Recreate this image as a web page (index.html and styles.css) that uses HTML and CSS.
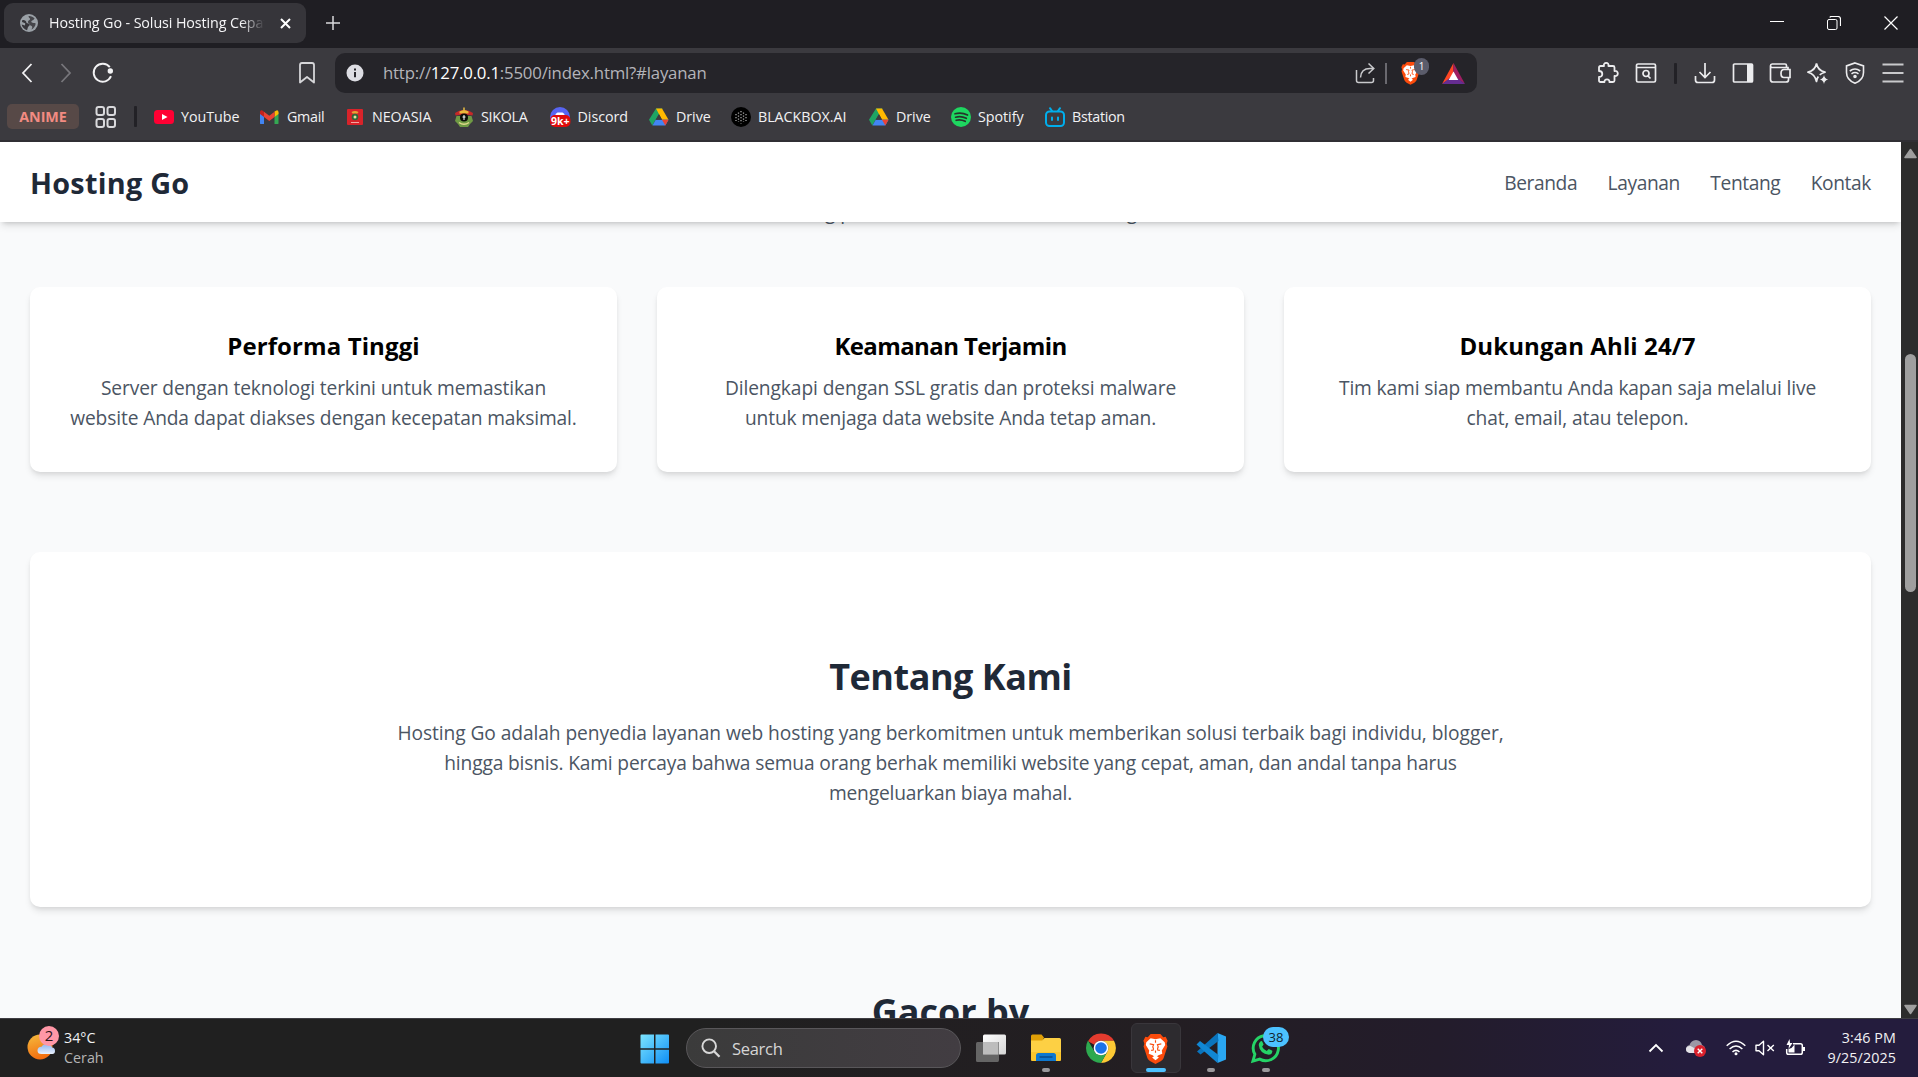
FILE: index.html
```html
<!DOCTYPE html>
<html lang="id">
<head>
<meta charset="utf-8">
<title>Hosting Go - Solusi Hosting Cepat</title>
<link rel="stylesheet" href="styles.css">
</head>
<body>
<div class="tabstrip">
  <div class="tab">
    <svg class="favicon" width="18" height="18" viewBox="0 0 18 18"><circle cx="9" cy="9" r="9" fill="#9aa0a6"/><path d="M2.2 6.2C4 5.400 6.200 6.400 6.300 8.200c.1 1.300 1.800.8 2.900 1.500 1.200.8.2 2.100-.8 2.800-.9.700-.6 2.500-1.400 3.800C4 15.400 1.900 12.600 1.700 10.500L5 11.400 5.200 9.200 2 8z" fill="#36353a"/><path d="M8.500 2c2-.3 4.600.6 6.200 2.700-1 .2-1 1.300-2 1.600-1.200.4-2 1.500-.9 2.100 1 .5 2.400.2 3.900 1.100-.3 2.700-1.900 4.900-4.300 5.900.7-1.200 1.300-2.300.5-3.200-.9-.9-2-.6-2.300-2-.2-1.200-1.700-1-1.700-2.300 0-1.700 2.300-1.500 2.300-2.900 0-1-1.600-.9-1.700-3z" fill="#36353a" opacity=".85"/></svg>
    <span class="tab-title">Hosting Go - Solusi Hosting Cepat</span>
    <svg class="tab-close" width="11" height="11" viewBox="0 0 11 11"><path d="M1 1l9 9M10 1l-9 9" stroke="#fff" stroke-width="2"/></svg>
  </div>
  <svg class="newtab" width="14" height="14" viewBox="0 0 14 14"><path d="M7 0v14M0 7h14" stroke="#d9d9dc" stroke-width="1.500"/></svg>
  <div class="winctl">
    <svg width="14" height="14" viewBox="0 0 14 14"><path d="M0 5.500h14" stroke="#fff"/></svg>
    <svg width="14" height="14" viewBox="0 0 14 14" fill="none" stroke="#fff"><rect x=".5" y="3.500" width="9.500" height="10" rx="1.500"/><path d="M3 1.500c0-.6.600-1 1.200-1H11c1.500 0 2.500 1 2.500 2.500V10" stroke-width="1.200"/></svg>
    <svg width="14" height="14" viewBox="0 0 14 14"><path d="M.5.5l13 13M13.500.5l-13 13" stroke="#fff" stroke-width="1.200"/></svg>
  </div>
</div>

<div class="toolbar">
  <svg class="back" width="12" height="20" viewBox="0 0 12 20"><path d="M10.500 1L2 10l8.500 9" fill="none" stroke="#f2f2f4" stroke-width="1.800"/></svg>
  <svg class="fwd" width="12" height="20" viewBox="0 0 12 20"><path d="M1.500 1L10 10l-8.500 9" fill="none" stroke="#77767b" stroke-width="1.800"/></svg>
  <svg class="reload" width="22" height="22" viewBox="0 0 22 22"><path d="M17.800 5.200A9 9 0 1 0 19 14.200" fill="none" stroke="#f2f2f4" stroke-width="1.900"/><circle cx="18.300" cy="9" r="2.700" fill="#f2f2f4"/></svg>
  <svg class="mark" width="16" height="22" viewBox="0 0 16 22"><path d="M3 1h10q2 0 2 2v17.500L8 15l-7 5.500V3q0-2 2-2z" fill="none" stroke="#d6d6d9" stroke-width="1.800" stroke-linejoin="round"/></svg>
  <div class="urlbar">
    <svg class="info" width="18" height="18" viewBox="0 0 18 18"><circle cx="9" cy="9" r="8.500" fill="#dddde3"/><path d="M9 8v5.200M9 4.500v2" stroke="#27262b" stroke-width="2"/></svg>
    <span class="url">http://<b>127.0.0.1</b>:5500/index.html?#layanan</span>
    <svg class="share" width="21" height="22" viewBox="0 0 21 22"><path d="M1.500 8v10.500q0 2 2 2h13q2 0 2-2V16M5.500 15.500c.3-5.500 3.500-9 9.500-9h3M13.500 1.500l5.300 5-5.300 5" fill="none" stroke="#c9c9cc" stroke-width="1.500"/></svg>
    <i class="urlsep"></i>
    <div class="shield">
      <svg width="19" height="24" viewBox="0 0 26 32"><use href="#brave"/></svg>
      <span class="count">1</span>
    </div>
    <svg class="bat" width="23" height="21" viewBox="0 0 23 21"><path d="M11.500 0L0 21l11.500-8z" fill="#ff4724"/><path d="M11.500 0L23 21l-11.500-8z" fill="#9e1f63"/><path d="M0 21l11.500-9L23 21z" fill="#662d91"/><path d="M11.500 8.500l4.800 8.500H6.700z" fill="#fff"/></svg>
  </div>
  <div class="tools">
    <svg width="22" height="22" viewBox="0 0 22 22" fill="none" stroke="#ececee" stroke-width="1.800" stroke-linejoin="round"><path d="M3.500 4H7c-.6-2 .6-3.100 2.200-3.100S12 2 11.400 4H16q1.500 0 1.500 1.500V9c2-.3 3.300.6 3.300 2.500S19.500 14.300 17.500 14v4.500q0 1.500-1.500 1.500h-3.600c.3-1.600-.7-2.600-2.400-2.600S7.200 18.400 7.500 20H3.500Q2 20 2 18.500V15c2.300 0 3.300-1.300 3.300-3S4 9 2 9V5.500Q2 4 3.500 4z"/></svg>
    <svg width="22" height="22" viewBox="0 0 22 22" fill="none" stroke="#ececee" stroke-width="1.700"><rect x="1.500" y="2" width="19" height="18" rx="1.500"/><path d="M1.500 5.500h19M13 14l2.500 2.500"/><circle cx="11" cy="11.500" r="3"/></svg>
    <i class="toolsep"></i>
    <svg width="22" height="22" viewBox="0 0 22 22" fill="none" stroke="#ececee" stroke-width="1.700"><path d="M11 1v14M5.500 10l5.500 5.500L16.500 10M1.500 14v4q0 2.500 2.500 2.500h14q2.500 0 2.500-2.500v-4"/></svg>
    <svg width="22" height="22" viewBox="0 0 22 22"><rect x="1.500" y="2" width="19" height="18" rx="1" fill="none" stroke="#ececee" stroke-width="1.700"/><path d="M15 2h6v18h-6z" fill="#ececee"/></svg>
    <svg width="22" height="22" viewBox="0 0 22 22" fill="none" stroke="#ececee" stroke-width="1.700"><path d="M19 7V5.500H3.200Q1.500 5.500 1.500 3.800T3.200 2H16q1.500 0 1.500 1.500v2M1.500 4v13.500Q1.500 20 4 20h13q2.500 0 2.500-2v-2M21 7.500h-6q-3 0-3 4t3 4h6z"/></svg>
    <svg width="22" height="22" viewBox="0 0 22 22"><path d="M9.500 1.500q1.300 7 8.500 8.700-3.300.9-5.300 2.600M9.500 1.500Q8.200 8.500 1 10.200q7 1.800 8.500 9.300.5-3 1.800-5" fill="none" stroke="#ececee" stroke-width="1.700" stroke-linejoin="round"/><path d="M17 13q.7 3.800 4.200 4.500-3.500.7-4.200 4.500-.7-3.800-4.200-4.500 3.500-.7 4.200-4.500z" fill="#ececee"/></svg>
    <svg width="22" height="22" viewBox="0 0 22 22" fill="none" stroke="#ececee" stroke-width="1.600"><path d="M11 .9l8.500 3v6.600c0 5-3.200 8.700-8.500 10.700C5.700 19.200 2.500 15.500 2.500 10.500V3.900z"/><path d="M5.800 9q5.200-4 10.400 0M7.500 11.800q3.500-2.500 7 0"/><circle cx="11" cy="14.500" r="1" fill="#ececee"/></svg>
    <svg width="22" height="22" viewBox="0 0 22 22" stroke="#c9c9cc" stroke-width="1.800"><path d="M.5 2.500h21M.5 11h21M.5 19.500h21"/></svg>
  </div>
</div>

<div class="bookmarks">
  <span class="chip">ANIME</span>
  <svg class="grid" width="22" height="22" viewBox="0 0 22 22" fill="none" stroke="#d9d9dc" stroke-width="2"><rect x="1.500" y="1" width="7.500" height="8" rx="2"/><rect x="12.500" y="1" width="7.500" height="8" rx="2"/><rect x="1.500" y="13" width="7.500" height="8" rx="2"/><rect x="12.500" y="13" width="7.500" height="8" rx="2"/></svg>
  <i class="barsep"></i>
  <div class="links">
    <a><svg width="20" height="20" viewBox="0 0 20 20"><rect y="3" width="20" height="14" rx="3.500" fill="#ff0033"/><path d="M8 7l5.500 3L8 13z" fill="#fff"/></svg>YouTube</a>
    <a><svg width="20" height="20" viewBox="0 0 20 20"><path d="M0 16.500V6l4 3v8H1.500Q0 17 0 16.500z" fill="#4285f4"/><path d="M14.500 17V9l4-3v10.500q0 .5-1.500.5z" fill="#34a853"/><path d="M14.500 4.500L17 3.300q1.500.2 1.500 2V7l-4 3z" fill="#fbbc04"/><path d="M4 4.700l5.300 4.100 5.200-4.100V10l-5.200 4L4 10z" fill="#ea4335"/><path d="M0 7V5.300Q0 3 2 3.300l2 1.400V10z" fill="#c5221f"/></svg><span class="tight">Gmail</span></a>
    <a><svg width="20" height="20" viewBox="0 0 20 20"><rect x="2" y="2" width="16" height="16" rx="1" fill="#d8232a"/><path d="M6.500 5q3.500-2 7 0l-1 1.500h-5z" fill="#e6a532"/><circle cx="10" cy="10" r="3.300" fill="#2d6b39"/><circle cx="10" cy="10" r="1.500" fill="#e9dca0"/><path d="M6 15.500h8" stroke="#f3a7a0"/></svg>NEOASIA</a>
    <a><svg width="20" height="20" viewBox="0 0 20 20"><path d="M9.300 3V.5h1.400V3z" fill="#f5c542"/><path d="M2.500 9L1 14l3 3 2 3h8l2-3 3-3-1.500-5z" fill="#6f9a44"/><path d="M1 6q4-3 9-3t9 3l-.5 2.500-4-.5h-9l-4 .5z" fill="#c62828"/><path d="M5.500 4.500q4.500-3 9 0v2h-9z" fill="#e9b93a"/><circle cx="10" cy="10.500" r="4" fill="#0a0d08"/><path d="M10 8v5M8.500 10h3" stroke="#fff"/><path d="M5 15.500q5 3.500 10 0" stroke="#e0d98c" fill="none" stroke-width="1.500"/></svg><span class="tight">SIKOLA</span></a>
    <a><svg width="21" height="20" viewBox="0 0 21 20"><circle cx="10" cy="10" r="10" fill="#5865f2"/><path d="M5 9q.5-3 2.500-3.500h5Q14.500 6 15 9z" fill="#fff"/><rect y="8" width="20.500" height="12" rx="5" fill="#e00b0b"/><text x="10.200" y="17.500" text-anchor="middle" class="nine">9k+</text></svg>Discord</a>
    <a><svg width="20" height="20" viewBox="0 0 20 20"><use href="#drive"/></svg>Drive</a>
    <a><svg width="20" height="20" viewBox="0 0 20 20"><circle cx="10" cy="10" r="10" fill="#000"/><g stroke="#a5a5a5" stroke-width="1.300" stroke-dasharray="1.300 1.700"><path d="M5 7v7M7.500 5.500v9.500M10 4v12.500M12.500 5.500v9.500M15 7v7"/></g></svg>BLACKBOX.AI</a>
    <a><svg width="20" height="20" viewBox="0 0 20 20"><use href="#drive"/></svg>Drive</a>
    <a><svg width="20" height="20" viewBox="0 0 20 20"><circle cx="10" cy="10" r="10" fill="#1ed760"/><path d="M4 6.800q6.500-2 12.500 1.200M4.600 10.200q5.500-1.500 10.700 1.100M5.200 13.300q4.500-1.200 9 1" fill="none" stroke="#26352b" stroke-width="1.700" stroke-linecap="round"/></svg>Spotify</a>
    <a><svg width="20" height="20" viewBox="0 0 20 20" fill="none" stroke="#00aeec" stroke-width="2" stroke-linecap="round"><rect x="1" y="4.500" width="18" height="14.500" rx="3.500"/><path d="M5 1.200L7 4M15 1.200L13 4M7 10.500v2.500M13 10.500v2.500"/></svg><span class="tight">Bstation</span></a>
  </div>
</div>

<div class="window">
  <div class="page">
    <header>
      <h1>Hosting Go</h1>
      <nav><a>Beranda</a><a>Layanan</a><a>Tentang</a><a>Kontak</a></nav>
    </header>
    <main>
      <p class="lead">Solusi hosting premium untuk web berkembang Anda</p>
      <div class="cards">
        <article><h3 class="w1">Performa Tinggi</h3><p><span>Server dengan teknologi terkini untuk memastikan</span><br><span>website Anda dapat diakses dengan kecepatan maksimal.</span></p></article>
        <article><h3 class="w2">Keamanan Terjamin</h3><p><span class="l1">Dilengkapi dengan SSL gratis dan proteksi malware</span><br><span>untuk menjaga data website Anda tetap aman.</span></p></article>
        <article><h3 class="w3">Dukungan Ahli 24/7</h3><p><span>Tim kami siap membantu Anda kapan saja melalui live</span><br><span>chat, email, atau telepon.</span></p></article>
      </div>
      <section class="about">
        <h2 class="w4">Tentang Kami</h2>
        <p><span class="l3">Hosting Go adalah penyedia layanan web hosting yang berkomitmen untuk memberikan solusi terbaik bagi individu, blogger,</span><br><span class="l2">hingga bisnis. Kami percaya bahwa semua orang berhak memiliki website yang cepat, aman, dan andal tanpa harus</span><br><span class="l2">mengeluarkan biaya mahal.</span></p>
      </section>
      <h2>Gacor by</h2>
    </main>
  </div>
  <div class="scroll">
    <svg width="13" height="11" viewBox="0 0 13 11"><path d="M6.500 1.500L12 9.500H1z" fill="#9f9f9f" stroke="#9f9f9f" stroke-width="1.500" stroke-linejoin="round"/></svg>
    <i class="thumb"></i>
    <svg class="down" width="13" height="11" viewBox="0 0 13 11"><path d="M6.500 9.500L1 1.500h11z" fill="#9f9f9f" stroke="#9f9f9f" stroke-width="1.500" stroke-linejoin="round"/></svg>
  </div>
</div>

<div class="taskbar">
  <div class="weather">
    <svg width="34" height="36" viewBox="0 0 34 36"><defs><linearGradient id="sun" x1=".3" y1="0" x2=".6" y2="1"><stop offset="0" stop-color="#f5b63a"/><stop offset="1" stop-color="#f2690d"/></linearGradient><linearGradient id="cl" x1="0" y1="0" x2="0" y2="1"><stop offset="0" stop-color="#8fb4ee"/><stop offset="1" stop-color="#e9f1fd"/></linearGradient></defs><circle cx="13" cy="22" r="12.500" fill="url(#sun)"/><path d="M14.500 29q-4 0-4-3.500t4-3.800Q16 18.500 20 19q4.500.5 5 3.500 3 0 3 3.500t-3.500 3z" fill="url(#cl)"/><circle cx="22" cy="11" r="10" fill="#ff97a6"/><text x="22" y="16" text-anchor="middle" class="wnum">2</text></svg>
    <div><span>34°C</span><span class="dim">Cerah</span></div>
  </div>
  <div class="apps">
    <svg class="start" width="30" height="30" viewBox="0 0 30 30"><defs><linearGradient id="win" gradientUnits="userSpaceOnUse" x1="0" y1="0" x2="30" y2="30"><stop offset="0" stop-color="#7fe7ff"/><stop offset="1" stop-color="#0c8cf5"/></linearGradient></defs><path d="M1.500.5H14v13.700H.5V1.500q0-1 1-1zM15.500.5H28q1 0 1 1v12.700H15.500zM.5 15.700H14v13.800H1.500q-1 0-1-1zM15.500 15.700H29v12.800q0 1-1 1H15.500z" fill="url(#win)"/></svg>
    <div class="search"><svg width="20" height="20" viewBox="0 0 20 20" fill="none" stroke="#d8d8d8" stroke-width="1.900"><circle cx="8.200" cy="8.200" r="6.800"/><path d="M13 13.200l5.500 5.500" stroke-width="2.300"/></svg><span>Search</span></div>
    <svg class="tv" width="32" height="30" viewBox="0 0 32 30"><defs><linearGradient id="t1" x1="0" y1="0" x2="1" y2="1"><stop offset="0" stop-color="#fff"/><stop offset="1" stop-color="#d5d5d5"/></linearGradient></defs><rect x="8" y="1.500" width="23" height="20" rx="1.500" fill="url(#t1)"/><path d="M2.500 9H24v12.500H24V27q0 2-1.500 2h-20Q1 29 1 27.500v-17Q1 9 2.500 9z" fill="#777" opacity=".8"/><path d="M8 9h15v12.500H8z" fill="#bdbdbd"/></svg>
    <svg class="fx" width="32" height="32" viewBox="0 0 32 32"><path d="M1 4q0-1.500 1.500-1.500h9L14 5.500 12 10H1z" fill="#e0a007"/><path d="M1 8.500h11L14.500 6H29.500Q31 6 31 7.500v20q0 1.500-1.500 1.500h-27Q1 29 1 27.500z" fill="#fdd044"/><path d="M1 20h30v7.500q0 1.500-1.500 1.500h-27Q1 29 1 27.500z" fill="#f9bd1c" opacity=".55"/><path d="M6 29v-5.500q0-2.500 2.500-2.500h15q2.500 0 2.500 2.500V29z" fill="#0f78cf"/><path d="M9.500 25h13" stroke="#0a4b8c" stroke-width="1.500"/></svg>
    <svg class="chrome" width="32" height="32" viewBox="0 0 48 48"><path d="M4.500 14A22.500 22.500 0 0 1 43.500 13H24a11 11 0 0 0-10 6z" fill="#e33b2e"/><path d="M43.500 13A22.500 22.500 0 0 1 24 46.500L33.500 29.500A11 11 0 0 0 24 13z" fill="#fcc934"/><path d="M4.500 12.800A22.500 22.500 0 0 0 24 46.500l9.500-17a11 11 0 0 1-19 0z" fill="#2da94f"/><circle cx="24" cy="24" r="11" fill="#fff"/><circle cx="24" cy="24" r="8.700" fill="#1a73e8"/></svg>
    <div class="active"><svg width="27" height="31" viewBox="0 0 26 32"><defs><g id="brave"><path d="M8 1h10l3 3.500 2.500-.6L25.500 8l-1 3 .8 3-4 12q-1 2-3 3.200L13 32l-5.300-2.800q-2-1.200-3-3.200L.7 14l.8-3-1-3 2-4.100L5 4.500z" fill="#fb4b0c"/><path d="M3.500 9.500L8 5.500l5 1 5-1 4.500 4 .5 3-3.500 5.500.5 3.500L16 23l-3 2-3-2-4-1.500.5-3.500L3 12.500z" fill="#fff"/><path d="M7 11.300l4 .7-.8 2.300q1 1.700.5 3.200l-2.200.5M19 11.300l-4 .7.8 2.300q-1 1.700-.5 3.200l2.200.5M13 7.500V10M13 18v2.500" fill="none" stroke="#fb4b0c" stroke-width="1.200"/><path d="M9.500 25.300L13 23l3.500 2.300L13 28z" fill="#fff"/></g><g id="drive"><path d="M7 1.500h6.500L7 12 3.300 18.500 0 12.700z" fill="#1fa463"/><path d="M7 1.500h6L19.500 12.700H13z" fill="#ffba00"/><path d="M3.500 18.500L6.700 12.700H19.500L16.300 18.500z" fill="#4285f4"/><path d="M13 12.700h6.500L16.300 18.500z" fill="#ea4335"/><path d="M10 7.200l3 5.500H6.800z" fill="#3b3a3f"/></g></defs><use href="#brave"/></svg><i></i></div>
    <svg class="vs" width="32" height="32" viewBox="0 0 32 32"><path d="M22.500 1L31 4.500v23L22.500 31z" fill="#2aa7f2"/><path d="M22.500 1L2 19.500l3.500 3L23.500 9z" fill="#0a74bd"/><path d="M22.500 31L1.500 12.500 5 9l18.500 14z" fill="#1187d4"/></svg>
    <div class="wa"><svg width="31" height="32" viewBox="0 0 32 32"><path d="M3 29.500l2-7A13 13 0 1 1 10 27.500z" fill="none" stroke="#25d366" stroke-width="3"/><path d="M10.500 9.500q1.500-1.500 2.500.5l1 2.500-1.500 2.200q1.500 3 4.800 4.500l2-2.200 3.700 1.800q.5 3.500-3.500 4.200Q10 22 9 13q0-2 1.500-3.500z" fill="#25d366"/></svg><span>38</span></div>
  </div>
  <div class="dots"><i></i><i></i><i></i></div>
  <div class="tray">
    <svg class="chev" width="16" height="12" viewBox="0 0 16 12"><path d="M1.500 9.500L8 3l6.500 6.500" fill="none" stroke="#fff" stroke-width="1.800"/></svg>
    <svg class="cloud" width="22" height="18" viewBox="0 0 22 18"><path d="M5 14Q.5 13.500 1 9.500 1.500 6.500 4.500 6 6 1.500 11 1q5 .3 6 5 3 1 3 4t-3 4z" fill="#9b98a5"/><path d="M4.500 14Q.8 13 1 9.800 2 6.500 5.500 7l9 5v2z" fill="#e4e3e8"/><circle cx="15" cy="12" r="6" fill="#d9202c"/><path d="M12.700 9.700l4.600 4.600M17.300 9.700l-4.600 4.600" stroke="#fff" stroke-width="1.400"/></svg>
    <svg class="wifi" width="20" height="16" viewBox="0 0 20 16" fill="none" stroke="#fff" stroke-width="1.500"><path d="M.7 5.800q9.300-9 18.600 0M3.600 9q6.400-6 12.800 0M6.500 12q3.500-3.200 7 0"/><circle cx="10" cy="13.700" r="1.500" fill="#fff" stroke="none"/></svg>
    <svg class="snd" width="20" height="16" viewBox="0 0 20 16" fill="none" stroke="#fff" stroke-width="1.400"><path d="M1 5.200h3L8.500 1.300v13.400L4 10.800H1zM12.500 5l6.300 6M18.800 5l-6.300 6" stroke-linejoin="round"/></svg>
    <svg class="pwr" width="21" height="18" viewBox="0 0 21 18"><path d="M8 4.700h7.500q1.800 0 1.800 1.800v7q0 1.800-1.800 1.800h-12q-1.800 0-1.800-1.800V10" fill="none" stroke="#fff" stroke-width="1.500"/><path d="M18 8h2v4h-2zM3.500 13.500V10l3-1 3-3.500V13.500z" fill="#fff"/><path d="M4.500 0L1.500 6H4l-.5 4 4-6H5z" fill="#fff"/></svg>
    <div class="clock"><span>3:46 PM</span><span>9/25/2025</span></div>
  </div>
</div>
</body>
</html>
```
FILE: styles.css
```css
* { box-sizing: border-box; margin: 0; padding: 0; }
body {
  width: 1918px; height: 1077px; overflow: hidden;
  display: flex; flex-direction: column;
  font-family: "Open Sans", "Noto Sans", sans-serif;
  background: #1f1e23; color: #f2f2f4;
}
svg { display: block; flex: none; }
i { display: block; flex: none; }

/* browser chrome */
.tabstrip { height: 48px; flex: none; display: flex; align-items: flex-start; background: #1f1e23; }
.tab {
  width: 302px; height: 40px; margin: 3px 0 0 4px; padding: 0 15px 0 16px;
  display: flex; align-items: center; border-radius: 9px; background: #36353a;
}
.tab-title {
  width: 218px; margin-left: 11px; overflow: hidden; white-space: nowrap;
  font-size: 14.3px; line-height: 20px; letter-spacing: -0.1px; color: #f5f5f7;
  -webkit-mask-image: linear-gradient(90deg, #000 88%, transparent 99%);
  mask-image: linear-gradient(90deg, #000 88%, transparent 99%);
}
.tab-close { margin-left: 13px; }
.newtab { margin: 16px 0 0 20px; }
.winctl { margin: 16px 20px 0 auto; display: flex; gap: 43px; }

.toolbar { height: 50px; flex: none; display: flex; align-items: center; background: #3b3a3f; }
.back { margin-left: 21px; }
.fwd { margin-left: 27px; }
.reload { margin-left: 20px; }
.mark { margin-left: 185px; }
.urlbar {
  width: 1142px; height: 40px; margin: 0 0 5px 20px; padding: 0 12px 0 11px; align-self: flex-end;
  display: flex; align-items: center; border-radius: 10px; background: #252429;
}
.url { margin-left: 19px; flex: 1; font-size: 16.8px; line-height: 24px; letter-spacing: -0.2px; color: #b4b4ba; }
.url b { font-weight: 400; color: #fff; }
.urlsep { width: 2px; height: 21px; margin: 0 14px 0 9px; background: #6a696f; }
.shield { width: 28px; position: relative; }
.count {
  position: absolute; left: 13px; top: -3px; width: 15px; height: 17px; border-radius: 8px;
  background: #5b5c6b; color: #fff; font-size: 10px; line-height: 17px; text-align: center;
}
.bat { margin-left: 13px; }
.tools { margin-left: 120px; display: flex; align-items: center; gap: 15.500px; }
.toolsep, .barsep { width: 3px; height: 21px; border-radius: 1px; background: #222126; }
.toolsep { margin: 0 2px 0 1.500px; }

.bookmarks {
  height: 44px; flex: none; padding-bottom: 6px; display: flex; align-items: center;
  background: #3b3a3f; border-bottom: 2px solid #302f34;
}
.bookmarks { padding-bottom: 5px; }
.chip {
  width: 72px; height: 25px; margin-left: 7px; border-radius: 5px; background: #574947;
  color: #f28b82; font-size: 14.3px; font-weight: 700; line-height: 25px; text-align: center;
}
.grid { margin-left: 16px; }
.barsep { margin: 0 17px 0 17px; }
.links { display: grid; grid-template-columns: 106px 85px 109px 95.500px 99.500px 82px 138px 82px 94px 90px; }
.links a { display: flex; align-items: center; gap: 7px; font-size: 14.300px; line-height: 20px; letter-spacing: -0.05px; white-space: nowrap; }
.links .tight { letter-spacing: -0.3px; }
.nine { font: 700 10.500px "Open Sans", sans-serif; fill: #fff; }

/* web page */
.window { height: 876px; flex: none; display: flex; }
.page { width: 1901px; overflow: hidden; background: #f9fafb; color: #000; }
header {
  position: relative; z-index: 1; height: 80px; padding: 0 30px;
  display: flex; align-items: center; justify-content: space-between;
  background: #fff; box-shadow: 0 5px 7.5px -1px rgba(0,0,0,.1), 0 2.5px 5px -2.5px rgba(0,0,0,.2);
}
h1 { font-size: 28.800px; line-height: 40px; font-weight: 700; letter-spacing: 0.25px; color: #1f2937; padding-top: 2px; }
nav { display: flex; gap: 30.400px; padding-top: 2px; font-size: 19.200px; line-height: 30px; letter-spacing: -0.4px; color: #4b5563; }
main { margin-top: -25px; padding: 0 30px; text-align: center; }
p { font-size: 19.200px; line-height: 30px; letter-spacing: -0.135px; color: #4b5563; white-space: nowrap; }
.lead { margin-bottom: 60px; }
.cards { display: grid; grid-template-columns: repeat(3, 1fr); gap: 40px; }
article, .about { background: #fff; border-radius: 10px; box-shadow: 0 5px 7.5px -1px rgba(0,0,0,.1), 0 2.5px 5px -2.5px rgba(0,0,0,.1); }
article { height: 185px; padding-top: 41px; }
h3 { font-size: 24px; line-height: 35px; margin-bottom: 10px; }
h2 { padding-top: 2px; font-size: 36px; line-height: 45px; color: #1f2937; }
.about { height: 355px; margin: 80px 0; padding-top: 100px; }
.about h2 { margin-bottom: 19px; }
.w1 { letter-spacing: 0.1px; }
.w2 { letter-spacing: -0.6px; }
.w3 { letter-spacing: 0.1px; }
.w4 { letter-spacing: -0.5px; }
.l1 { letter-spacing: -0.100px; }
.l2 { letter-spacing: -0.165px; }
.l3 { letter-spacing: -0.080px; }

.scroll { width: 17px; padding: 6px 0 3px 1px; display: flex; flex-direction: column; align-items: center; background: #2c2c2c; }
.thumb { width: 11px; height: 238px; margin-top: 195px; border-radius: 6px; background: #9f9f9f; }
.down { margin-top: auto; }

/* desktop taskbar */
.taskbar {
  height: 59px; flex: none; display: flex; position: relative; border-top: 1px solid #3e3d42;
  background: linear-gradient(90deg, #202020 0, #202020 36%, #231e22 60%, #231c2b 75%, #241c3d 88%);
  font-size: 14.300px; line-height: 20px;
}
.weather { width: 640px; display: flex; padding: 6px 0 0 27px; }
.weather div { display: flex; flex-direction: column; margin-left: 3px; padding-top: 3px; }
.weather .dim { color: #b5b5b5; }
.wnum { font: 15px "Open Sans", sans-serif; fill: #2b1417; }
.apps { display: flex; align-items: flex-start; }
.start { margin-top: 14.500px; }
.search {
  width: 275px; height: 40px; margin: 9px 0 0 16px; padding-left: 14px; border: 1px solid #59575a; border-radius: 20px;
  display: flex; align-items: center; gap: 11px; background: linear-gradient(90deg, #3b3b3b, #423d42);
  font-size: 16.500px; letter-spacing: -0.3px; color: #d5d5d5;
}
.search span { padding-top: 2px; }
.tv { margin: 14px 0 0 14px; }
.fx { margin: 13px 0 0 23px; }
.chrome { margin: 13px 0 0 23px; }
.active {
  width: 50px; height: 50px; margin: 4px 0 0 14px; padding: 9px 1px 0 0; border: 1px solid #39363b; border-radius: 6px;
  display: flex; flex-direction: column; align-items: center; background: #2d2b2f;
}
.active i { width: 20px; height: 4px; margin-top: 4px; border-radius: 2px; background: #4cc2ff; }
.vs { margin: 13px 0 0 14px; }
.wa { position: relative; margin: 13px 0 0 23px; }
.wa span {
  position: absolute; left: 13px; top: -5px; width: 26px; height: 20px; border-radius: 10px;
  background: #4cc2ff; color: #10222e; font-size: 13px; line-height: 20px; text-align: center;
}
.dots i { position: absolute; top: 49px; left: 1042px; width: 8px; height: 4px; border-radius: 2px; background: #9a989b; }
.dots i:nth-child(2) { left: 1207px; }
.dots i:nth-child(3) { left: 1262px; }
.tray { margin-left: auto; padding-right: 22px; display: flex; align-items: center; }
.cloud { margin-left: 21px; }
.wifi { margin-left: 19px; }
.snd { margin-left: 9px; }
.pwr { margin-left: 10px; }
.clock { width: 90px; display: flex; flex-direction: column; align-items: flex-end; letter-spacing: 0.1px; }
```
